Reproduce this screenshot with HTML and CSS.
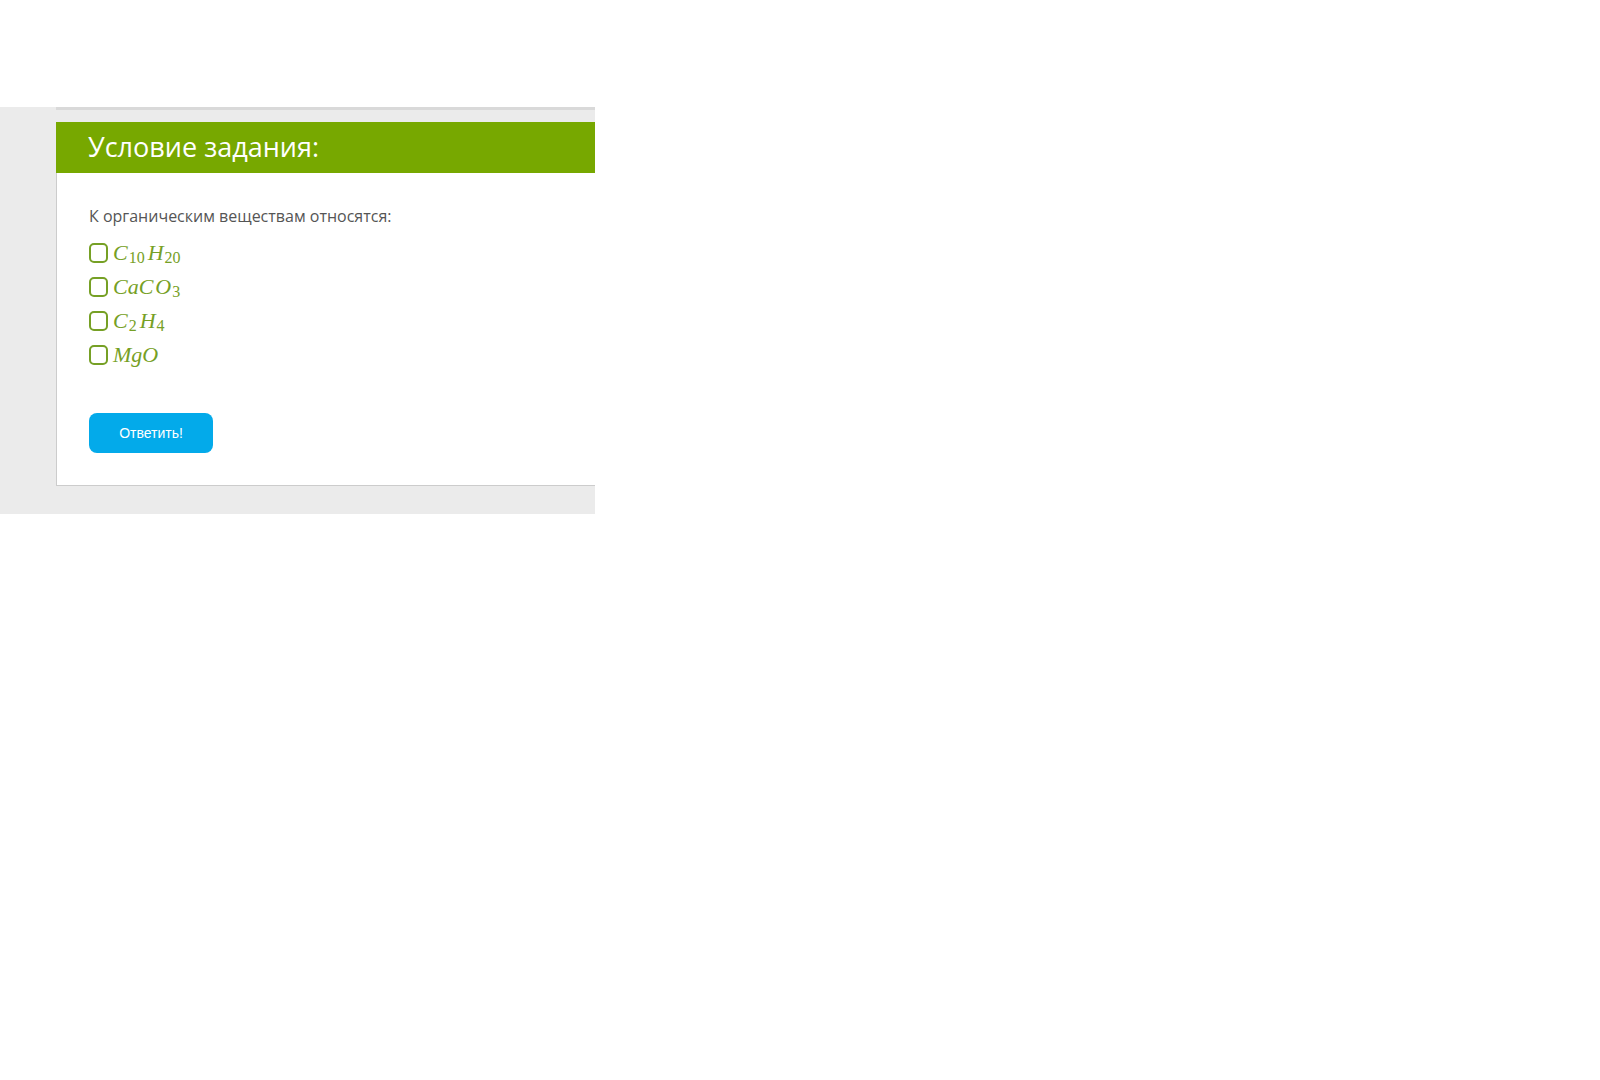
FILE: index.html
```html
<!DOCTYPE html>
<html lang="ru">
<head>
    <meta charset="UTF-8">
    <meta name="viewport" content="width=device-width, initial-scale=1.0">
    <title>Условие задания</title>
    <link rel="stylesheet" href="styles.css">
</head>
<body>
    <div class="page-top"></div>
    <div class="task-panel">
        <div class="task-strip"></div>
        <div class="task-card">
            <div class="task-header">Условие задания:</div>
            <div class="task-body">
                <p class="question">К органическим веществам относятся:</p>
                <ul class="options">
                    <li class="option">
                        <span class="checkbox"></span>
                        <span class="formula"><i>C</i><sub class="mid">10</sub><i>H</i><sub>20</sub></span>
                    </li>
                    <li class="option">
                        <span class="checkbox"></span>
                        <span class="formula"><i>CaC</i><i class="gap">O</i><sub>3</sub></span>
                    </li>
                    <li class="option">
                        <span class="checkbox"></span>
                        <span class="formula"><i>C</i><sub class="mid">2</sub><i>H</i><sub>4</sub></span>
                    </li>
                    <li class="option">
                        <span class="checkbox"></span>
                        <span class="formula"><i>MgO</i></span>
                    </li>
                </ul>
                <button class="answer-button">Ответить!</button>
            </div>
        </div>
    </div>
</body>
</html>
```

FILE: styles.css
```css
body {
    font-family: "Open Sans", Arial, sans-serif;
    background-color: #fff;
    margin: 0;
    padding: 0;
}

.page-top {
    height: 107px;
}

.task-panel {
    width: 539px;
    background-color: #ebebeb;
    padding: 0 0 28px 56px;
}

.task-strip {
    height: 3px;
    background-color: #d9d9d9;
    margin-bottom: 12px;
}

.task-card {
    background: #fff;
    border-left: 1px solid #cccccc;
    border-bottom: 1px solid #cccccc;
}

.task-header {
    background-color: #77a800;
    color: #fff;
    font-size: 27px;
    height: 51px;
    line-height: 49px;
    padding-left: 32px;
    margin-left: -1px;
}

.task-body {
    padding: 32px 32px 32px 32px;
}

.question {
    margin: 0;
    font-size: 16px;
    line-height: 22px;
    color: #555;
}

.options {
    list-style: none;
    margin: 9px 0 41px 0;
    padding: 0;
}

.option {
    display: flex;
    align-items: center;
    height: 34px;
}

.checkbox {
    width: 15px;
    height: 16px;
    border: 2px solid #76a025;
    border-radius: 5px;
    margin-right: 5px;
}

.formula {
    font-family: "Liberation Serif", "Times New Roman", serif;
    font-size: 22px;
    color: #76a025;
    line-height: 24px;
}

.formula i {
    font-style: italic;
}

.formula .gap {
    margin-left: 2px;
}

.formula sub {
    font-style: normal;
    font-size: 16px;
    vertical-align: -3px;
    line-height: 0;
    margin-left: 1px;
}

.formula sub.mid {
    margin-right: 3px;
}

.answer-button {
    width: 124px;
    height: 40px;
    border: none;
    border-radius: 8px;
    background-color: #03aaea;
    color: #fff;
    font-family: "Liberation Sans", Arial, sans-serif;
    font-size: 14px;
    cursor: pointer;
    padding: 0;
}
```
